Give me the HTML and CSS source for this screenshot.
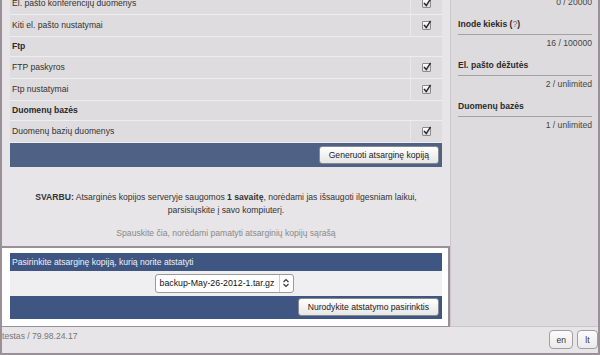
FILE: index.html
```html
<!DOCTYPE html>
<html lang="lt">
<head>
    <meta charset="UTF-8">
    <meta name="viewport" content="width=device-width, initial-scale=1.0">
    <title>Atsarginės kopijos</title>
    <link rel="stylesheet" href="styles.css">
</head>
<body>
    <div class="langas">
        <div class="pagrindas">
            <div class="turinys">
                <table class="parinktys">
                    <tr><td>El. pašto konferencijų duomenys</td><td class="zyma"><span class="varnele"><svg width="10" height="10" viewBox="0 0 10 10"><path d="M2 5 L4.3 7.6 L8.6 0.8" fill="none" stroke="#2b2b2b" stroke-width="1.5"/></svg></span></td></tr>
                    <tr><td>Kiti el. pašto nustatymai</td><td class="zyma"><span class="varnele"><svg width="10" height="10" viewBox="0 0 10 10"><path d="M2 5 L4.3 7.6 L8.6 0.8" fill="none" stroke="#2b2b2b" stroke-width="1.5"/></svg></span></td></tr>
                    <tr class="antraste"><td colspan="2">Ftp</td></tr>
                    <tr><td>FTP paskyros</td><td class="zyma"><span class="varnele"><svg width="10" height="10" viewBox="0 0 10 10"><path d="M2 5 L4.3 7.6 L8.6 0.8" fill="none" stroke="#2b2b2b" stroke-width="1.5"/></svg></span></td></tr>
                    <tr><td>Ftp nustatymai</td><td class="zyma"><span class="varnele"><svg width="10" height="10" viewBox="0 0 10 10"><path d="M2 5 L4.3 7.6 L8.6 0.8" fill="none" stroke="#2b2b2b" stroke-width="1.5"/></svg></span></td></tr>
                    <tr class="antraste"><td colspan="2">Duomenų bazės</td></tr>
                    <tr><td>Duomenų bazių duomenys</td><td class="zyma"><span class="varnele"><svg width="10" height="10" viewBox="0 0 10 10"><path d="M2 5 L4.3 7.6 L8.6 0.8" fill="none" stroke="#2b2b2b" stroke-width="1.5"/></svg></span></td></tr>
                </table>
                <div class="juosta">
                    <button class="mygtukas">Generuoti atsarginę kopiją</button>
                </div>

                <p class="svarbu"><b>SVARBU:</b> Atsarginės kopijos serveryje saugomos <b>1 savaitę</b>, norėdami jas išsaugoti ilgesniam laikui,<br>parsisiųskite į savo kompiuterį.</p>
                <p class="nuoroda">Spauskite čia, norėdami pamatyti atsarginių kopijų sąrašą</p>

                <div class="atstatymas">
                    <div class="atstatymas-antraste">Pasirinkite atsarginę kopiją, kurią norite atstatyti</div>
                    <div class="atstatymas-eilute">
                        <div class="sarasas">
                            <span class="sarasas-tekstas">backup-May-26-2012-1.tar.gz</span>
                            <span class="sarasas-rodykles"><svg width="8" height="10" viewBox="0 0 8 10"><path d="M1.5 4 L4 1.5 L6.5 4 M1.5 6 L4 8.5 L6.5 6" fill="none" stroke="#333" stroke-width="1.1"/></svg></span>
                        </div>
                    </div>
                    <div class="juosta tamsi">
                        <button class="mygtukas">Nurodykite atstatymo pasirinktis</button>
                    </div>
                </div>
            </div>

            <div class="soninis">
                <div class="reiksme pirma">0 / 20000</div>
                <div class="pavadinimas">Inode kiekis (<span class="klaustukas">?</span>)</div>
                <div class="reiksme">16 / 100000</div>
                <div class="pavadinimas">El. pašto dėžutės</div>
                <div class="reiksme">2 / unlimited</div>
                <div class="pavadinimas">Duomenų bazės</div>
                <div class="reiksme">1 / unlimited</div>
            </div>
        </div>

        <div class="apacia">
            <span class="serveris">testas / 79.98.24.17</span>
            <div class="kalbos">
                <button class="kalba">en</button>
                <button class="kalba">lt</button>
            </div>
        </div>
    </div>
</body>
</html>
```

FILE: styles.css
```css
:root {
    --remelis: #9a9098;
    --fonas: #e7e5e7;
    --eilute: #dedcde;
    --melyna: #506186;
    --melyna-tamsi: #3f5682;
}

* {
    box-sizing: border-box;
}

body {
    margin: 0;
    font-family: "Liberation Sans", Arial, sans-serif;
    font-size: 8.6px;
    color: #333;
    background: var(--fonas);
}

.langas {
    width: 600px;
    height: 355px;
    border: 2px solid var(--remelis);
    border-top: 0;
    display: flex;
    flex-direction: column;
    overflow: hidden;
}

.pagrindas {
    display: flex;
    height: 327px;
    overflow: hidden;
}

.turinys {
    width: 448px;
    flex-shrink: 0;
    padding: 0 8px;
    margin-top: -8px;
}

.parinktys {
    width: 100%;
    border-collapse: collapse;
}

.parinktys td {
    background: var(--eilute);
    height: 22px;
    padding: 0 2px;
    border-bottom: 1px solid #efedef;
}

.parinktys .antraste td {
    height: 20px;
    font-weight: bold;
    color: #2a2a2a;
}

.parinktys td.zyma {
    width: 32px;
    text-align: center;
    border-left: 1px solid #e9e7e9;
    padding: 0;
}

.varnele {
    display: inline-block;
    width: 9px;
    height: 9px;
    border: 1px solid #8c8a8c;
    border-radius: 1px;
    background: linear-gradient(#fdfdfd, #dcdcdc);
    position: relative;
    vertical-align: middle;
}

.varnele svg {
    position: absolute;
    left: -1px;
    top: -2px;
}

.juosta {
    background: var(--melyna);
    height: 24px;
    display: flex;
    justify-content: flex-end;
    align-items: center;
    padding: 0 3px;
}

.juosta.tamsi {
    background: var(--melyna-tamsi);
    height: 23px;
}

.mygtukas {
    font-family: inherit;
    font-size: 8.6px;
    color: #222;
    height: 18px;
    padding: 0 9px;
    border: 1px solid #8a8a8a;
    border-radius: 3px;
    background: linear-gradient(#ffffff, #e6e6e6);
}

.svarbu {
    margin: 24px 0 0;
    line-height: 13px;
    text-align: center;
    color: #333;
}

.nuoroda {
    margin: 10px 0 0;
    line-height: 13px;
    text-align: center;
    color: #8a888a;
}

.atstatymas {
    margin: 6px -8px 0 -8px;
    background: #fff;
    border: 2px solid var(--remelis);
    border-left: 0;
    padding: 5px 6px 7px 8px;
}

.atstatymas-antraste {
    background: var(--melyna-tamsi);
    color: #eef1f7;
    height: 18px;
    line-height: 18px;
    padding: 0 2px;
}

.atstatymas-eilute {
    background: #efeef0;
    height: 25px;
    display: flex;
    justify-content: center;
    align-items: center;
    padding-right: 4px;
}

.sarasas {
    display: flex;
    align-items: stretch;
    height: 19px;
    width: 139px;
    border: 1px solid #9a9a9a;
    border-radius: 3px;
    background: #fff;
    font-size: 8.8px;
    color: #111;
}

.sarasas-tekstas {
    flex: 1;
    display: flex;
    align-items: center;
    padding-left: 4px;
}

.sarasas-rodykles {
    width: 14px;
    border-left: 1px solid #cfcfcf;
    display: flex;
    align-items: center;
    justify-content: center;
}

.soninis {
    flex: 1;
    border-left: 1px solid #c9c7c9;
    border-bottom: 1px solid #c9c7c9;
    background: #dddbdd;
    padding: 0 6px 0 7px;
}

.pavadinimas {
    font-weight: bold;
    color: #2a2a2a;
    line-height: 13px;
    padding-bottom: 3px;
    border-bottom: 1px solid #a3a1a3;
}

.klaustukas {
    font-weight: normal;
    color: #5a6b93;
}

.reiksme {
    text-align: right;
    line-height: 13px;
    margin: 2px 0 9px;
    color: #444;
}

.reiksme.pirma {
    margin-top: -4px;
}

.apacia {
    flex: 1;
    display: flex;
    justify-content: space-between;
    align-items: flex-start;
    padding-right: 0;
}

.serveris {
    margin-top: 3px;
    line-height: 13px;
    color: #777;
}

.kalbos {
    display: flex;
    gap: 4px;
    margin-top: 3px;
}

.kalba {
    font-family: inherit;
    font-size: 8.6px;
    color: #333;
    height: 19px;
    min-width: 21px;
    padding: 0 6px;
    border: 1px solid #a09ea0;
    border-radius: 4px;
    background: linear-gradient(#fbfbfb, #ebebeb);
}
```
